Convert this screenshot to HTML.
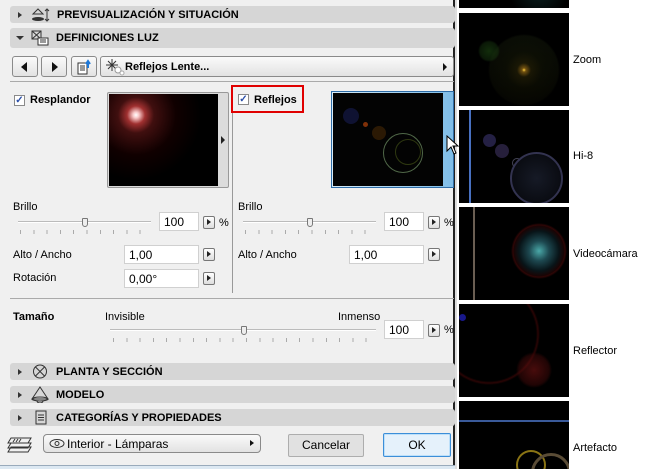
<!DOCTYPE html>
<html><head><meta charset="utf-8"><style>
*{box-sizing:border-box;margin:0;padding:0}
html,body{width:645px;height:469px;overflow:hidden}
body{background:#fff;font-family:"Liberation Sans",sans-serif;font-size:11px;color:#000;position:relative}
.a{position:absolute}
.left{left:0;top:0;width:455px;height:469px;background:#f0f0f0}
.hdr{position:absolute;left:10px;width:445px;background:#d6d6d6;border-radius:3px;font-weight:bold;font-size:11px}
.hdr span{position:absolute;top:50%;transform:translateY(-50%)}
.tri{position:absolute;left:8px;top:50%;width:0;height:0;border-top:3px solid transparent;border-bottom:3px solid transparent;border-left:4px solid #333;margin-top:-3px}
.trid{position:absolute;left:6px;top:50%;margin-top:-2px;border-left:4px solid transparent;border-right:4px solid transparent;border-top:4px solid #333}
.btn{position:absolute;background:linear-gradient(#fafafa,#e2e2e2);border:1px solid #8a8a8a;border-radius:3px}
.inp{position:absolute;background:#fff;border:1px solid #d0d0d0;padding:2px 0 0 4px;height:19px;font-size:12px}
.ab{position:absolute;width:12px;height:13px;border:1px solid #777;border-radius:2px;background:linear-gradient(#fff,#ddd)}
.ab:after{content:"";position:absolute;left:3px;top:2px;border-top:3.5px solid transparent;border-bottom:3.5px solid transparent;border-left:4px solid #222}
.lbl{position:absolute;font-size:11px}
.slider{position:absolute;height:2px;background:#bbb;border-bottom:1px solid #fff}
.thumb{position:absolute;width:6px;height:9px;background:#eee;border:1px solid #777;border-radius:1px 1px 3px 3px}
.ticks{position:absolute;height:4px;background:repeating-linear-gradient(90deg,#aaa 0 1px,transparent 1px 13.3px)}
.cb{position:absolute;width:11px;height:11px;border:1px solid #8a8a8a;background:#fff;font-size:10px;line-height:9px;text-align:center;color:#2a4ea8;font-weight:bold}
.tile{position:absolute;left:459px;width:110px;background:#000;overflow:hidden}
.tl{position:absolute;left:573px;font-size:11px}
</style></head><body>
<div class="a" style="left:0;top:0;width:645px;height:469px;overflow:hidden">
<div class="a left"></div>
<div class="a" style="left:453px;top:0;width:2px;height:469px;background:#222"></div>
<div class="a" style="left:455px;top:0;width:2px;height:469px;background:#ddd"></div>

<div class="hdr" style="top:6px;height:17px"><div class="tri"></div>
<svg class="a" style="left:20px;top:1px" width="22" height="16"><path d="M3 7 L8 2 L13 7 Z" fill="none" stroke="#333"/><ellipse cx="8" cy="12" rx="6" ry="2" fill="#333"/><path d="M17 2v12M15 4l2-2 2 2M15 12l2 2 2-2" stroke="#333" fill="none"/></svg>
<span style="left:47px">PREVISUALIZACIÓN Y SITUACIÓN</span></div>
<div class="hdr" style="top:28px;height:20px"><div class="trid"></div>
<svg class="a" style="left:20px;top:2px" width="22" height="16"><rect x="2" y="1" width="9" height="8" fill="none" stroke="#333"/><path d="M2 1l9 8M11 1l-9 8" stroke="#333"/><rect x="8" y="8" width="10" height="7" fill="#fff" stroke="#333"/><path d="M10 10h6M10 12h6" stroke="#333"/></svg>
<span style="left:46px">DEFINICIONES LUZ</span></div>

<div class="btn" style="left:12px;top:56px;width:26px;height:21px"><div class="a" style="left:8px;top:5px;border-top:5px solid transparent;border-bottom:5px solid transparent;border-right:6px solid #111"></div></div>
<div class="btn" style="left:41px;top:56px;width:26px;height:21px"><div class="a" style="left:10px;top:5px;border-top:5px solid transparent;border-bottom:5px solid transparent;border-left:6px solid #111"></div></div>
<div class="btn" style="left:71px;top:56px;width:26px;height:21px"><svg class="a" style="left:4px;top:2px" width="18" height="16"><rect x="2" y="4" width="9" height="11" fill="#fff" stroke="#333"/><path d="M4 7h5M4 9h5M4 11h5" stroke="#333"/><path d="M12 9V3M10 5l2-3 2 3" stroke="#1e78d8" stroke-width="2" fill="none"/></svg></div>
<div class="btn" style="left:100px;top:56px;width:354px;height:21px"><svg class="a" style="left:4px;top:1px" width="20" height="18"><path d="M7 1v12M1 7h12M3 3l8 8M11 3l-8 8" stroke="#333"/><circle cx="13" cy="12" r="3" fill="#fff" stroke="#999"/><circle cx="17" cy="15" r="2" fill="#fff" stroke="#aaa"/></svg>
<span class="a" style="left:24px;top:4px;font-weight:bold">Reflejos Lente...</span><div class="a" style="right:6px;top:6px;border-top:4px solid transparent;border-bottom:4px solid transparent;border-left:4px solid #111"></div></div>
<div class="a" style="left:10px;top:81px;width:444px;height:1px;background:#aaa"></div>

<div class="cb" style="left:14px;top:95px">✓</div><div class="lbl" style="left:30px;top:94px;font-weight:bold">Resplandor</div>
<div class="a" style="left:107px;top:92px;width:122px;height:96px;border:1px solid #999;border-radius:2px;background:#dcdcdc">
<div class="a" style="left:1px;top:1px;width:109px;height:92px;background:radial-gradient(circle at 27px 21px,#fff 0,#f8c8c8 3px,#a03030 9px,#400f0f 18px,#100000 40px,#000 65px)"></div>
<div class="a" style="left:113px;top:43px;border-top:4px solid transparent;border-bottom:4px solid transparent;border-left:4px solid #222"></div></div>

<div class="a" style="left:232px;top:85px;width:1px;height:208px;background:#999"></div>
<div class="a" style="left:231px;top:85px;width:73px;height:28px;border:2px solid #e00000"></div>
<div class="cb" style="left:238px;top:94px">✓</div><div class="lbl" style="left:254px;top:94px;font-weight:bold">Reflejos</div>
<div class="a" style="left:331px;top:91px;width:123px;height:97px;border:1px solid #2e6da8;background:linear-gradient(90deg,#d8ecf8,#7fbde8)">
<div class="a" style="left:1px;top:1px;width:110px;height:93px;background:#030303;overflow:hidden">
<div class="a" style="left:10px;top:15px;width:16px;height:16px;border-radius:50%;background:rgba(40,50,140,.35)"></div>
<div class="a" style="left:30px;top:29px;width:5px;height:5px;border-radius:50%;background:#803008"></div>
<div class="a" style="left:39px;top:33px;width:14px;height:14px;border-radius:50%;background:rgba(120,70,10,.35)"></div>
<div class="a" style="left:50px;top:40px;width:40px;height:40px;border-radius:50%;border:1px solid rgba(100,130,90,.8)"></div>
<div class="a" style="left:62px;top:46px;width:26px;height:26px;border-radius:50%;border:1px solid rgba(90,110,30,.5)"></div>
</div></div>
<svg class="a" style="left:446px;top:135px" width="14" height="22"><path d="M1 1v15l4-4 3 7 2-1-3-7h5z" fill="#fff" stroke="#000"/></svg>

<div class="lbl" style="left:13px;top:201px">Brillo</div>
<div class="slider" style="left:18px;top:221px;width:133px"></div><div class="thumb" style="left:82px;top:218px"></div>
<div class="ticks" style="left:20px;top:230px;width:133px"></div>
<div class="inp" style="left:159px;top:212px;width:40px">100</div><div class="ab" style="left:203px;top:216px"></div><div class="lbl" style="left:219px;top:217px">%</div>
<div class="lbl" style="left:13px;top:249px">Alto / Ancho</div>
<div class="inp" style="left:124px;top:245px;width:75px">1,00</div><div class="ab" style="left:203px;top:248px"></div>
<div class="lbl" style="left:13px;top:272px">Rotación</div>
<div class="inp" style="left:124px;top:269px;width:75px">0,00°</div><div class="ab" style="left:203px;top:272px"></div>
<div class="lbl" style="left:238px;top:201px">Brillo</div>
<div class="slider" style="left:243px;top:221px;width:133px"></div><div class="thumb" style="left:307px;top:218px"></div>
<div class="ticks" style="left:245px;top:230px;width:133px"></div>
<div class="inp" style="left:384px;top:212px;width:40px">100</div><div class="ab" style="left:428px;top:216px"></div><div class="lbl" style="left:444px;top:217px">%</div>
<div class="lbl" style="left:238px;top:249px">Alto / Ancho</div>
<div class="inp" style="left:349px;top:245px;width:75px">1,00</div><div class="ab" style="left:428px;top:248px"></div>

<div class="a" style="left:10px;top:298px;width:444px;height:1px;background:#aaa"></div>
<div class="lbl" style="left:13px;top:311px;font-weight:bold">Tamaño</div>
<div class="lbl" style="left:105px;top:311px">Invisible</div>
<div class="lbl" style="left:338px;top:311px">Inmenso</div>
<div class="slider" style="left:110px;top:329px;width:266px"></div><div class="thumb" style="left:241px;top:326px"></div>
<div class="ticks" style="left:113px;top:338px;width:266px"></div>
<div class="inp" style="left:384px;top:320px;width:40px">100</div><div class="ab" style="left:428px;top:324px"></div><div class="lbl" style="left:444px;top:324px">%</div>

<div class="hdr" style="top:363px;height:17px"><div class="tri"></div>
<svg class="a" style="left:21px;top:0px" width="18" height="17"><circle cx="9" cy="8.5" r="6.5" fill="none" stroke="#333"/><path d="M4.5 4l9 9M13.5 4l-9 9" stroke="#333"/></svg>
<span style="left:46px">PLANTA Y SECCIÓN</span></div>
<div class="hdr" style="top:386px;height:17px"><div class="tri"></div>
<svg class="a" style="left:20px;top:0px" width="22" height="17"><path d="M10 1L2 13h16z" fill="none" stroke="#333"/><ellipse cx="10" cy="13" rx="8" ry="2" fill="none" stroke="#333"/><path d="M7 15a3 2 0 0 0 6 0" stroke="#333" fill="none"/></svg>
<span style="left:46px">MODELO</span></div>
<div class="hdr" style="top:409px;height:17px"><div class="tri"></div>
<svg class="a" style="left:24px;top:1px" width="14" height="15"><rect x="2" y="1" width="10" height="13" fill="none" stroke="#333"/><path d="M4 5h6M4 7.5h6M4 10h6" stroke="#333"/></svg>
<span style="left:46px">CATEGORÍAS Y PROPIEDADES</span></div>

<svg class="a" style="left:7px;top:436px" width="28" height="18"><path d="M4 2h20l-3 5H1z M4 7h20l-3 5H1z M4 11h20l-3 5H1z" fill="#f0f0f0" stroke="#333"/><path d="M8 3l-2 3M11 3l-2 3M14 3l-2 3" stroke="#333"/></svg>
<div class="btn" style="left:43px;top:434px;width:218px;height:19px;border-radius:4px"><svg class="a" style="left:5px;top:3px" width="16" height="11"><ellipse cx="8" cy="5.5" rx="7" ry="4" fill="none" stroke="#333"/><circle cx="8" cy="5.5" r="2" fill="none" stroke="#333"/></svg><span class="a" style="left:23px;top:2px;font-size:12px">Interior - Lámparas</span><div class="a" style="right:6px;top:5px;border-top:3.5px solid transparent;border-bottom:3.5px solid transparent;border-left:4px solid #111"></div></div>
<div class="btn" style="left:288px;top:434px;width:76px;height:23px;border-color:#adadad;border-radius:2px;background:#e1e1e1;text-align:center;line-height:21px;font-size:12px">Cancelar</div>
<div class="btn" style="left:383px;top:433px;width:68px;height:24px;border:1px solid #3c8ed8;border-radius:2px;background:#e5f1fb;box-shadow:inset 0 0 0 1px #bde0fa;text-align:center;line-height:22px;font-size:12px">OK</div>
<div class="a" style="left:0;top:465px;width:455px;height:4px;background:#dce8f2;border-top:1px solid #9ab"></div>

<div class="tile" style="top:0;height:8px;background:radial-gradient(circle at 80px -10px,#0a2020,#000 30px)"></div>
<div class="tile" style="top:13px;height:93px;background:radial-gradient(circle at 30px 38px,rgba(40,100,25,.45) 0,rgba(30,70,20,.35) 9px,transparent 11px),radial-gradient(circle at 65px 57px,#ffd040 0,#705010 2px,rgba(60,50,8,.4) 7px,rgba(30,30,5,.3) 18px,rgba(18,18,4,.3) 34px,#000 36px),linear-gradient(#080e08,#000)"></div>
<div class="tl" style="top:54px">Zoom</div>
<div class="tile" style="top:110px;height:93px;background:#000">
<div class="a" style="left:10px;top:0;width:2px;height:93px;background:#4870c0"></div>
<div class="a" style="left:24px;top:24px;width:13px;height:13px;border-radius:50%;background:rgba(90,80,170,.4)"></div>
<div class="a" style="left:36px;top:34px;width:14px;height:14px;border-radius:50%;background:rgba(110,90,170,.35)"></div>
<div class="a" style="left:53px;top:48px;width:10px;height:10px;border-radius:50%;border:1px solid #445"></div>
<div class="a" style="left:51px;top:42px;width:53px;height:53px;border-radius:50%;border:2px solid #333350;background:radial-gradient(#161a26,#05060a)"></div>
</div>
<div class="tl" style="top:150px">Hi-8</div>
<div class="tile" style="top:207px;height:93px;background:radial-gradient(circle at 80px 44px,#4aa8a8 0,#1d4850 10px,#081418 20px,#1a0404 25px,#300606 26px,#000 28px)">
<div class="a" style="left:14px;top:0;width:2px;height:93px;background:#6a5e52"></div></div>
<div class="tl" style="top:248px">Videocámara</div>
<div class="tile" style="top:304px;height:93px;background:radial-gradient(circle at 75px 66px,rgba(120,20,20,.6) 0,rgba(70,10,10,.45) 15px,transparent 18px),radial-gradient(circle at 30px 30px,#000 47px,#2a0404 49px,#000 51px),#000">
<div class="a" style="left:0;top:10px;width:7px;height:7px;border-radius:50%;background:#18188a"></div></div>
<div class="tl" style="top:345px">Reflector</div>
<div class="tile" style="top:401px;height:68px;background:#000">
<div class="a" style="left:0;top:19px;width:110px;height:2px;background:#3a5a9a"></div>
<div class="a" style="left:57px;top:49px;width:30px;height:30px;border-radius:50%;border:2px solid #8a7414"></div>
<div class="a" style="left:72px;top:52px;width:40px;height:40px;border-radius:50%;border:3px solid #5a4c36"></div></div>
<div class="tl" style="top:442px">Artefacto</div>
</div>
</body></html>
